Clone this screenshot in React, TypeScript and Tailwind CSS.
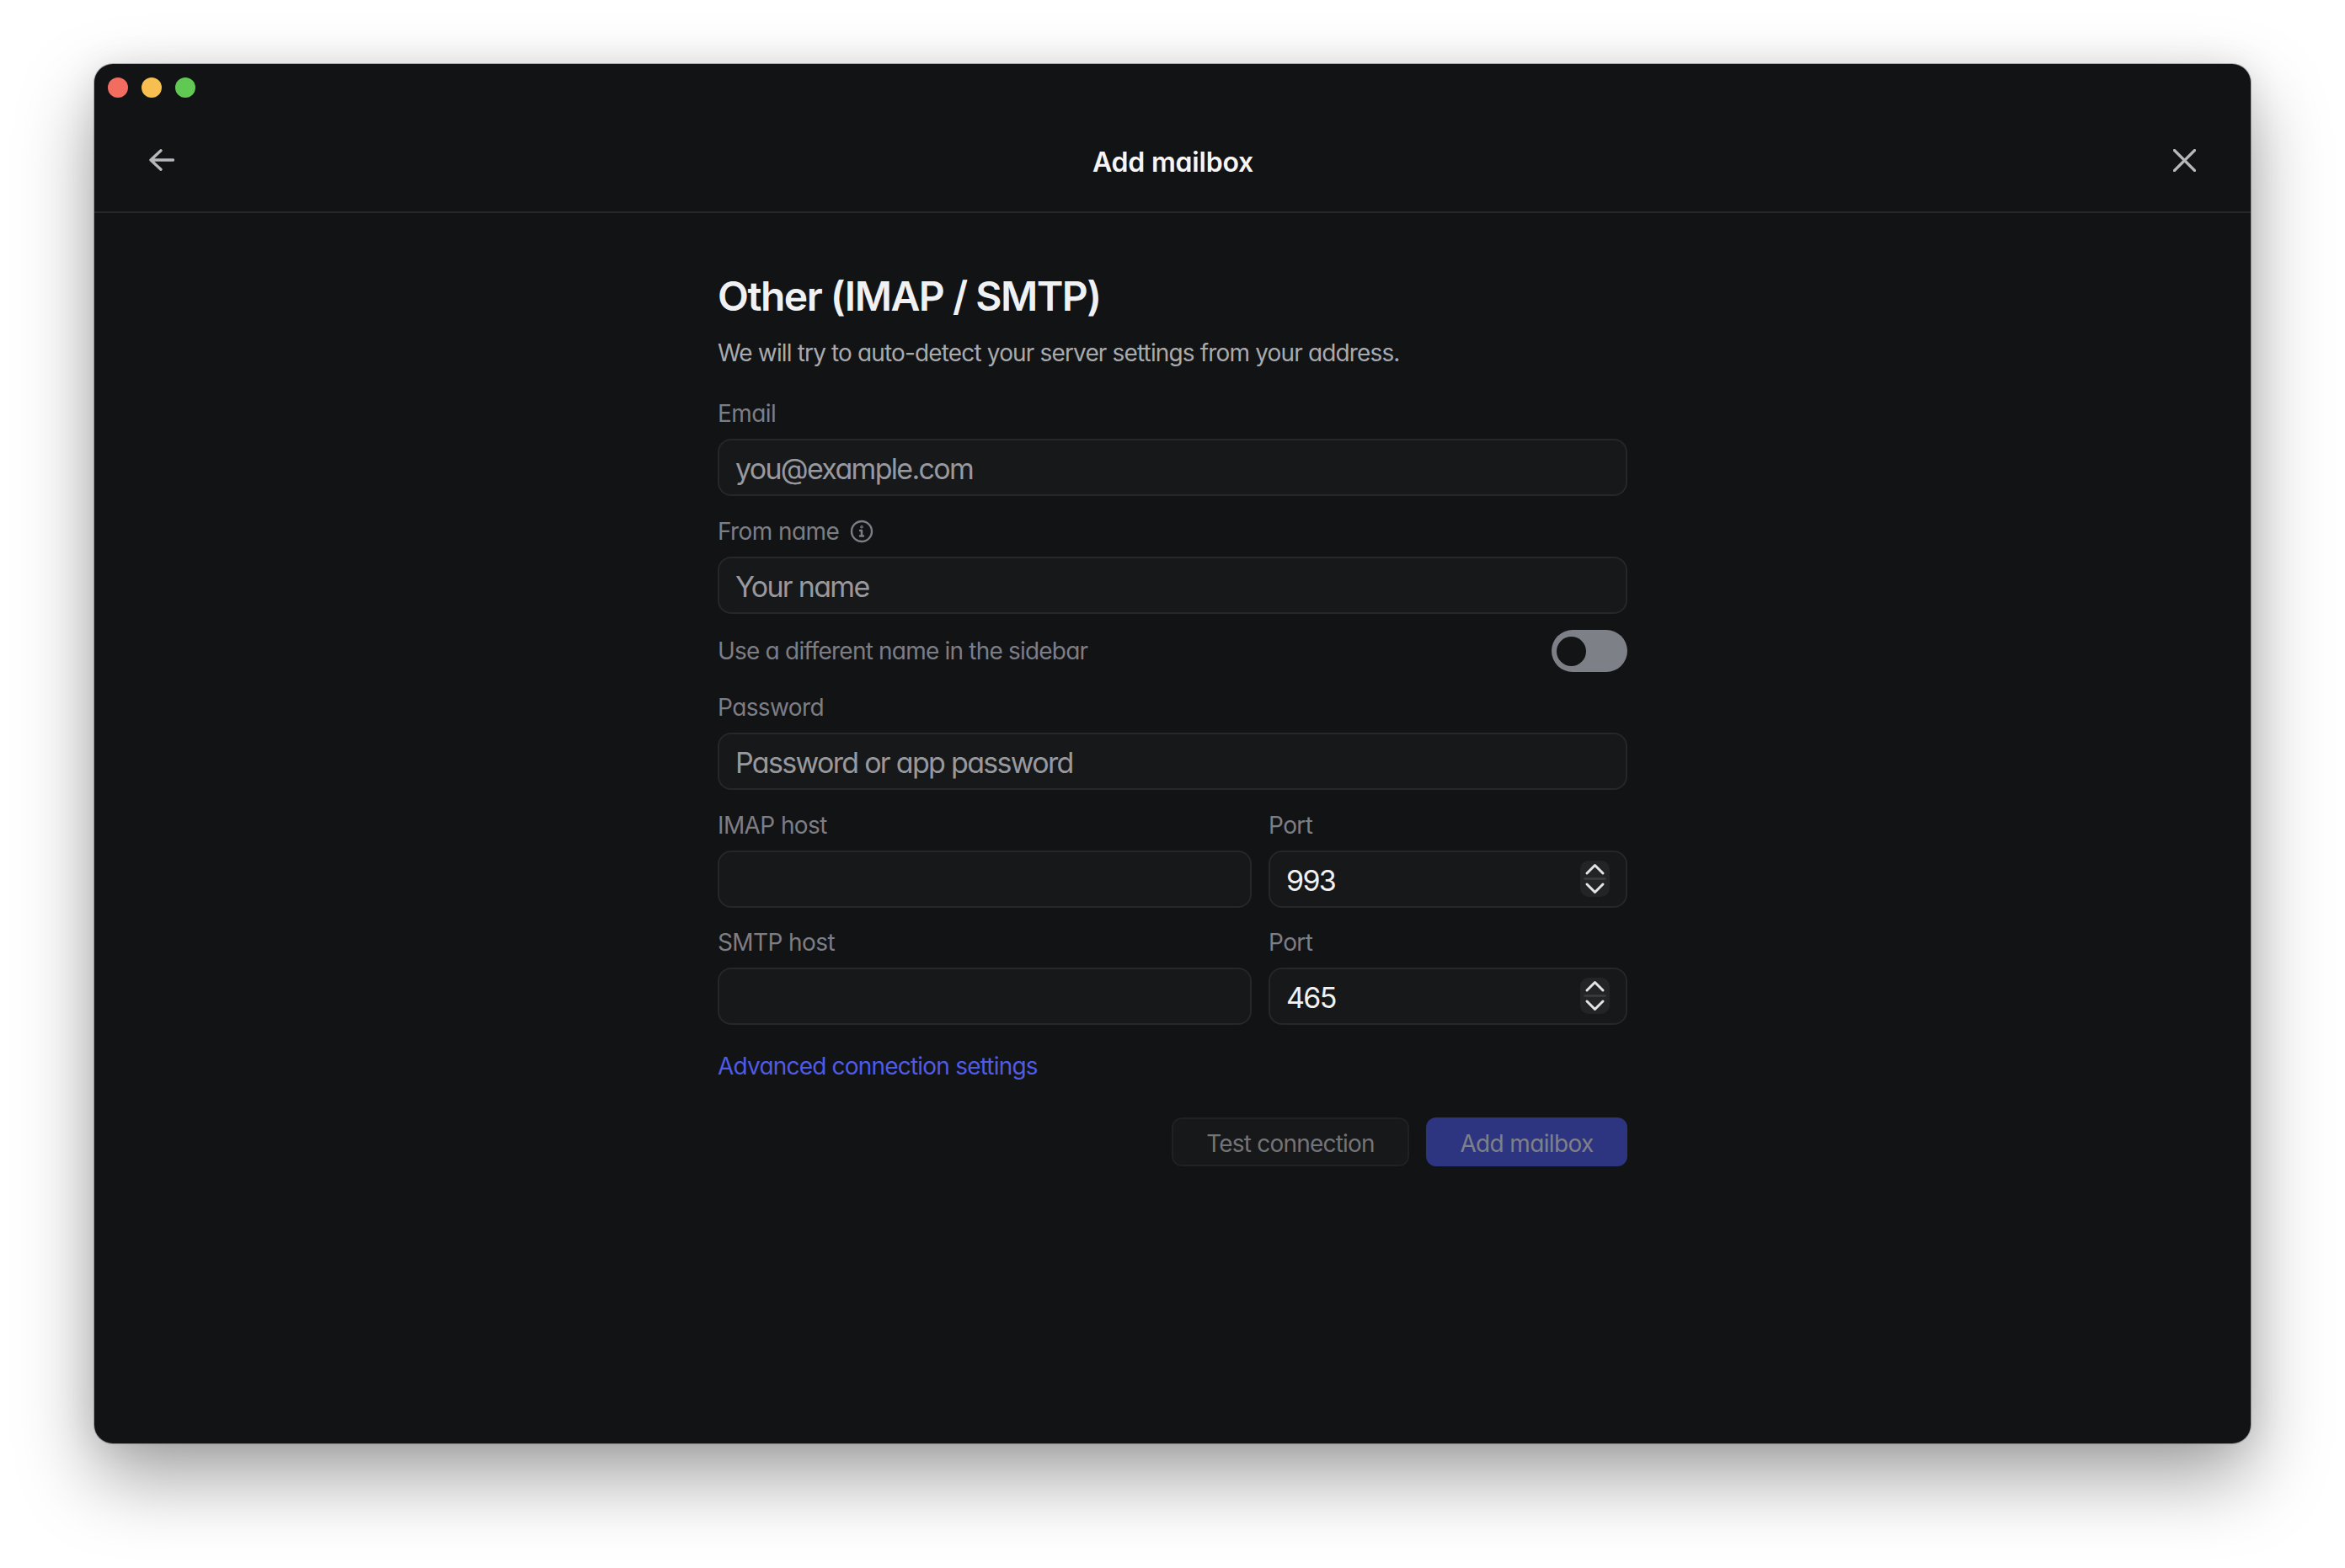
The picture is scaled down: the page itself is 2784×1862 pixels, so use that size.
import React from 'react';

const inputClass =
  "w-full h-[68px] rounded-[16px] border-2 border-[#26272a] bg-[#17181a] px-[19px] pt-[2px] text-[34px] tracking-[-1.7px] outline-none placeholder:text-[#98999e]";

function Label({ children }: { children: React.ReactNode }) {
  return <div className="h-[36px] mb-3 flex items-center text-[28px] leading-[36px] tracking-[-0.6px] text-[#7d7e85]">{children}</div>;
}

function Field({ label, placeholder, className }: { label: React.ReactNode; placeholder?: string; className?: string }) {
  return (
    <div className={className}>
      <Label>{label}</Label>
      <input className={inputClass} placeholder={placeholder} />
    </div>
  );
}

function PortField({ value }: { value: string }) {
  return (
    <div className="w-[426px] shrink-0">
      <Label>Port</Label>
      <div className="relative">
        <input readOnly value={value} className={`${inputClass} text-[#f1f1f2]`} />
        <div className="absolute right-[21px] top-[12px] w-[35px] h-[43px] rounded-[10px] bg-[#232426]">
          <svg viewBox="0 0 35 43" className="w-[35px] h-[43px]" fill="none" strokeLinecap="round" strokeLinejoin="round">
            <path d="M8 15 L17.5 5.5 L27 15" stroke="#e4e4e6" strokeWidth="3" />
            <path d="M5.5 21.5 H29.5" stroke="#3b3c3f" strokeWidth="2.5" />
            <path d="M8 28 L17.5 37.5 L27 28" stroke="#e4e4e6" strokeWidth="3" />
          </svg>
        </div>
      </div>
    </div>
  );
}

export default function App() {
  return (
    <div className="min-h-screen bg-white pl-[112px] pt-[76px] pb-[148px] font-['Inter','Noto_Sans',sans-serif] [font-feature-settings:'cv11']">
      <div className="w-[2560px] h-[1638px] rounded-[22px] bg-[#121315] shadow-[0_0_0_1px_rgba(0,0,0,0.25),0_40px_90px_rgba(0,0,0,0.37),0_0_40px_rgba(0,0,0,0.08)]">
        {/* Title bar */}
        <div className="h-[177px] border-b-2 border-[#26272a]">
          <div className="flex gap-4 pl-[16px] pt-[16px]">
            <div className="w-6 h-6 rounded-full bg-[#f26d60]" />
            <div className="w-6 h-6 rounded-full bg-[#f6bf4f]" />
            <div className="w-6 h-6 rounded-full bg-[#60c853]" />
          </div>
          <div className="flex items-center justify-between px-[65px] pt-[51px]">
            <svg viewBox="0 0 30 26" className="w-[30px] h-[26px]" fill="none" stroke="#b7b8bb" strokeWidth="3.4" strokeLinecap="round" strokeLinejoin="round">
              <path d="M28.5 13 H2 M14 1.8 L2 13 L14 24.2" />
            </svg>
            <div className="mt-[6px] mr-[2px] text-[32px] leading-[40px] tracking-[-0.2px] font-semibold text-[#f5f5f6]">Add mailbox</div>
            <svg viewBox="0 0 27 27" className="w-[27px] h-[27px]" fill="none" stroke="#b7b8bb" strokeWidth="3.2" strokeLinecap="round">
              <path d="M1.5 1.5 L25.5 25.5 M25.5 1.5 L1.5 25.5" />
            </svg>
          </div>
        </div>

        {/* Form */}
        <div className="w-[1080px] mx-auto pt-[69px]">
          <h1 className="text-[48px] leading-[60px] tracking-[-1.5px] font-semibold text-[#f0f1f3]">Other (IMAP / SMTP)</h1>
          <p className="mt-[17px] mb-[34px] text-[28px] leading-[40px] tracking-[-0.85px] text-[#a9aaae]">
            We will try to auto-detect your server settings from your address.
          </p>

          <Field label="Email" placeholder="you@example.com" />
          <Field
            className="mt-6"
            label={
              <span className="flex items-center gap-[13px]">
                From name
                <svg viewBox="0 0 28 28" className="w-[28px] h-[28px]" fill="none" stroke="#7d7e85" strokeWidth="2.4" strokeLinecap="round">
                  <circle cx="14" cy="14" r="12" />
                  <path d="M14 13 V19.5 M12 13 H14 M12 19.5 H16" />
                  <circle cx="14" cy="8.8" r="0.6" />
                </svg>
              </span>
            }
            placeholder="Your name"
          />

          <div className="mt-[19px] flex items-center justify-between">
            <span className="text-[28px] leading-[36px] tracking-[-0.8px] text-[#7d7e85]">Use a different name in the sidebar</span>
            <div className="w-[90px] h-[50px] rounded-full bg-[#7e8088] flex items-center pl-[6px]">
              <div className="w-[35px] h-[35px] rounded-full bg-[#131416]" />
            </div>
          </div>

          <Field className="mt-6" label="Password" placeholder="Password or app password" />

          <div className="mt-6 flex gap-5">
            <Field className="flex-1" label="IMAP host" />
            <PortField value="993" />
          </div>
          <div className="mt-[23px] flex gap-5">
            <Field className="flex-1" label="SMTP host" />
            <PortField value="465" />
          </div>

          <div className="mt-[31px] mb-[43px] text-[28px] leading-[36px] tracking-[-0.8px] text-[#4f5be6]">Advanced connection settings</div>

          <div className="flex justify-end gap-5">
            <button className="w-[282px] h-[58px] pt-[4px] rounded-[12px] border-2 border-[#202124] bg-[#17181a] text-[28px] tracking-[-0.8px] text-[#737478]">
              Test connection
            </button>
            <button className="w-[239px] h-[58px] pt-[4px] rounded-[12px] bg-[#2e3580] text-[28px] tracking-[-0.65px] text-[#7f8088]">
              Add mailbox
            </button>
          </div>
        </div>
      </div>
    </div>
  );
}
